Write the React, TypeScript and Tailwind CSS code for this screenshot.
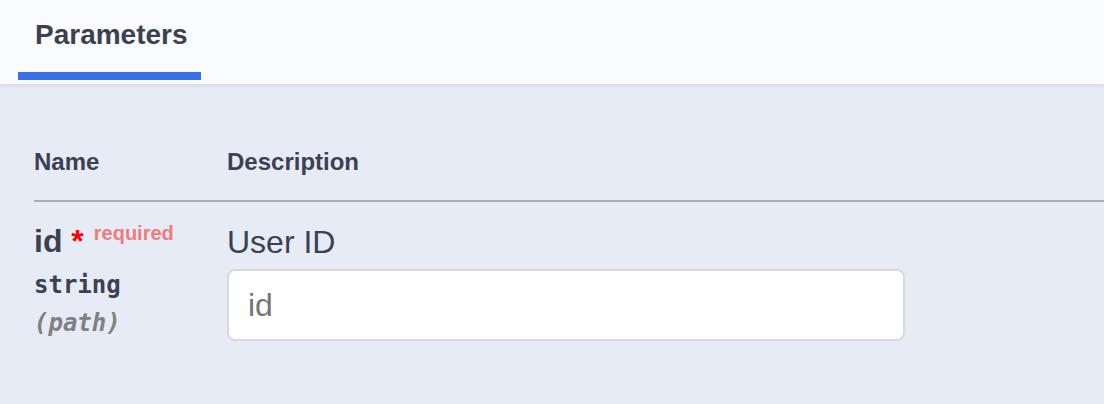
export default function App() {
  const sans = "font-['Liberation_Sans',Arial,sans-serif]";
  const mono = "font-['DejaVu_Sans_Mono',monospace]";

  return (
    <div className={`h-[404px] w-[1104px] overflow-hidden bg-[#e6ebf6] text-[#3b4151] ${sans}`}>
      {/* tab strip */}
      <div className="relative z-10 h-[84px] bg-[#f9fbfe] px-[18px] shadow-[0_2px_4px_rgba(0,0,0,0.08)]">
        <div className="w-[183px] pt-[18px]">
          <div className="pl-[17px] text-[28px] leading-[34px] font-bold">Parameters</div>
          <div className="mt-[20px] h-[8px] bg-[#3770e4]" />
        </div>
      </div>

      <div className="pl-[34px]">
        {/* table header */}
        <div className="flex border-b-2 border-[#a9aebb] pt-[63px] pb-[23px] text-[24px] leading-[30px] font-bold">
          <div className="w-[193px]">Name</div>
          <div>Description</div>
        </div>

        {/* param row */}
        <div className="flex pt-[19px]">
          <div className="w-[193px]">
            <div className="text-[32px] leading-[40px] font-bold whitespace-nowrap">
              id<span className="text-[#ff0000]">&nbsp;*</span>
              <span className="relative -top-[12px] px-[10px] text-[20px] text-[#ef7c7c]">required</span>
            </div>
            <div className={`mt-[5px] text-[24px] leading-[30px] font-bold ${mono}`}>string</div>
            <div className={`mt-[8px] text-[24px] leading-[30px] font-bold italic text-[#808080] ${mono}`}>
              (path)
            </div>
          </div>
          <div>
            <div className="mt-px text-[32px] leading-[40px]">User ID</div>
            <input
              type="text"
              placeholder="id"
              className="mt-[7px] h-[72px] w-[678px] rounded-[8px] border-2 border-[#d9d9d9] bg-white px-[19px] text-[32px] text-[#3b4151] outline-none placeholder:text-[#757575]"
            />
          </div>
        </div>
      </div>
    </div>
  );
}
